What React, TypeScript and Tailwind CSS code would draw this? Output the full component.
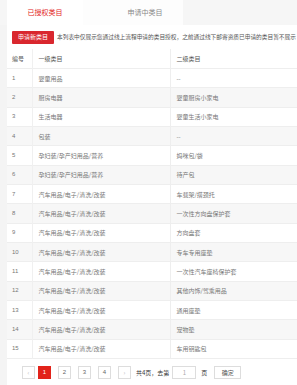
const rows: [string, string][] = [
  ['婴童用品', '--'],
  ['厨房电器', '婴童厨房小家电'],
  ['生活电器', '婴童生活小家电'],
  ['包装', '--'],
  ['孕妇装/孕产妇用品/营养', '妈咪包/袋'],
  ['孕妇装/孕产妇用品/营养', '待产包'],
  ['汽车用品/电子/清洗/改装', '车载架/搭颈托'],
  ['汽车用品/电子/清洗/改装', '一次性方向盘保护套'],
  ['汽车用品/电子/清洗/改装', '方向盘套'],
  ['汽车用品/电子/清洗/改装', '专车专用座垫'],
  ['汽车用品/电子/清洗/改装', '一次性汽车座椅保护套'],
  ['汽车用品/电子/清洗/改装', '其他内饰/驾乘用品'],
  ['汽车用品/电子/清洗/改装', '通用座垫'],
  ['汽车用品/电子/清洗/改装', '宠物垫'],
  ['汽车用品/电子/清洗/改装', '车用钥匙包'],
];

export default function App() {
  return (
    <div className="w-[297px] h-[385px] overflow-hidden bg-[#f4f4f4] font-['Noto_Sans_CJK_SC',sans-serif] text-[#666]">
      <div className="flex h-[25px] bg-[#f6f6f6] pl-[7px]">
        <div className="w-[76px] bg-white flex items-center justify-center text-[7px] text-[#e2231a]">
          已授权类目
        </div>
        <div className="w-[100px] bg-[#fdfdfd] flex items-center justify-center pl-[24px] text-[7px] text-[#888]">
          申请中类目
        </div>
      </div>

      <div className="ml-[7px] bg-white h-[360px]">
        <div className="flex items-center h-[24px] pl-[5px] whitespace-nowrap">
          <button className="h-[13px] px-[6px] bg-[#d9272e] text-white text-[6px] leading-none rounded-[1px]">
            申请新类目
          </button>
          <span className="ml-[3px] text-[5.7px] text-[#555]">
            本列表中仅展示您通过线上流程申请的类目授权，之前通过线下邮寄资质已申请的类目暂不展示
          </span>
        </div>

        <table className="w-[420px] border-collapse text-[6px] text-[#777] table-fixed font-['Noto_Sans_CJK_SC',sans-serif]">
          <colgroup>
            <col className="w-[25px]" />
            <col className="w-[138px]" />
            <col />
          </colgroup>
          <thead>
            <tr className="h-[19.5px] border-b border-[#eee] text-[#555]">
              <th className="font-normal text-left pl-[5px] border-r border-[#f0f0f0]">编号</th>
              <th className="font-normal text-left pl-[6px] border-r border-[#eee]">一级类目</th>
              <th className="font-normal text-left pl-[6px]">二级类目</th>
            </tr>
          </thead>
          <tbody>
            {rows.map(([a, b], i) => (
              <tr
                key={i}
                className={`h-[19.35px] border-b border-[#eee] ${i % 2 === 1 ? 'bg-[#f7f7f7]' : 'bg-white'}`}
              >
                <td className="pl-[5px] border-r border-[#f0f0f0] font-['Liberation_Sans',sans-serif]">{i + 1}</td>
                <td className="pl-[6px] border-r border-[#eee]">{a}</td>
                <td className="pl-[6px]">{b}</td>
              </tr>
            ))}
          </tbody>
        </table>

        <div className="flex items-center h-[26px] pl-[15px] text-[6px] text-[#666] whitespace-nowrap">
          <span className="w-[13px] h-[13px] border border-[#ddd] flex items-center justify-center text-[#bbb]">‹</span>
          <span className="ml-[3px] w-[13px] h-[13px] bg-[#e2231a] text-white flex items-center justify-center font-['Liberation_Sans',sans-serif]">1</span>
          <span className="ml-[7px] w-[13px] h-[13px] border border-[#ddd] flex items-center justify-center font-['Liberation_Sans',sans-serif]">2</span>
          <span className="ml-[7px] w-[13px] h-[13px] border border-[#ddd] flex items-center justify-center font-['Liberation_Sans',sans-serif]">3</span>
          <span className="ml-[7px] w-[13px] h-[13px] border border-[#ddd] flex items-center justify-center font-['Liberation_Sans',sans-serif]">4</span>
          <span className="ml-[7px] w-[13px] h-[13px] border border-[#ddd] flex items-center justify-center text-[#bbb]">›</span>
          <span className="ml-[5px] text-[#333]">共4页，去第</span>
          <span className="ml-[3px] w-[24px] h-[13px] border border-[#ddd] flex items-center justify-center text-[#aaa]">1</span>
          <span className="ml-[5px] text-[#333]">页</span>
          <span className="ml-[7px] w-[27px] h-[13px] border border-[#ddd] flex items-center justify-center text-[#555]">确定</span>
        </div>
      </div>
    </div>
  );
}
